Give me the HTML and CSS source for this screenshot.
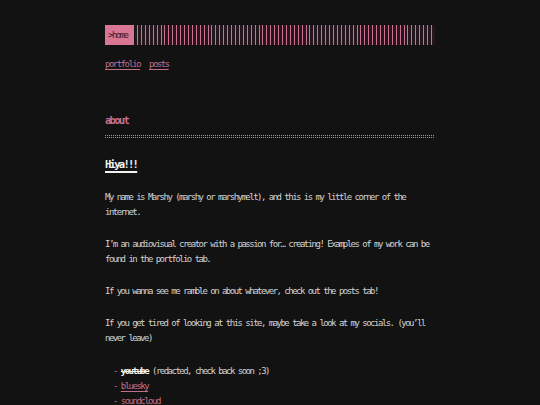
FILE: index.html
```html
<!DOCTYPE html>
<html lang="en">
<head>
<meta charset="utf-8">
<title>home</title>
<link rel="stylesheet" href="styles.css">
</head>
<body>
<div class="page">
  <header class="topbar">
    <div class="home">&gt;home</div>
    <div class="stripes"></div>
  </header>
  <nav class="nav">
    <a href="#">portfolio</a>
    <a href="#">posts</a>
  </nav>
  <section class="about">
    <h2 class="section-title">about</h2>
    <div class="dots"></div>
    <h3 class="hiya">Hiya!!!</h3>
    <p>My name is Marshy (marshy or marshymelt), and this is my little corner of the internet.</p>
    <p>I’m an audiovisual creator with a passion for… creating! Examples of my work can be found in the portfolio tab.</p>
    <p>If you wanna see me ramble on about whatever, check out the posts tab!</p>
    <p>If you get tired of looking at this site, maybe take a look at my socials. (you’ll never leave)</p>
    <ul class="socials">
      <li><s class="strike">youtube</s> (redacted, check back soon ;3)</li>
      <li><a href="#">bluesky</a></li>
      <li><a href="#">soundcloud</a></li>
    </ul>
  </section>
</div>
</body>
</html>
```
FILE: styles.css
```css
html, body {
  margin: 0;
  padding: 0;
  background: #121212;
}
body {
  font-family: "DejaVu Sans Mono", monospace;
  font-size: 9px;
  letter-spacing: -1.52px;
  line-height: 15px;
  color: #d2d2d2;
}
.page {
  width: 330px;
  margin: 0 auto;
  padding-top: 25px;
}
.topbar {
  display: flex;
  height: 20px;
}
.home {
  width: 26px;
  padding-left: 3px;
  background: #d87693;
  color: #3a1624;
  line-height: 20px;
}
.stripes {
  flex: 1;
  margin-left: 1px;
  background: repeating-linear-gradient(90deg, #24161c 0 2px, #c87491 2px 3px, #24161c 3px 3.92px);
}
.nav {
  display: flex;
  gap: 9px;
  margin-top: 12px;
}
.nav a, .socials a {
  color: #c0708c;
  text-decoration: underline;
  text-underline-offset: 2px;
}
.about {
  margin-top: 41px;
}
.section-title {
  margin: 0;
  font-size: 10.5px;
  letter-spacing: -1.72px;
  line-height: 15px;
  color: #c86f8c;
  font-weight: bold;
}
.dots {
  height: 4px;
  margin-top: 7px;
  background-image:
    linear-gradient(to bottom, transparent 1px, #121212 1px),
    linear-gradient(90deg, #dc7c9c 1px, transparent 1px);
  background-size: 2px 2px;
}
.hiya {
  margin: 18px 0 0;
  font-size: 10.5px;
  letter-spacing: -1.72px;
  line-height: 15px;
  color: #f2f2f2;
  font-weight: bold;
  text-decoration: underline;
  text-decoration-thickness: 1.5px;
  text-underline-offset: 3px;
}
p {
  margin: 18px 0 0;
}
p + p {
  margin-top: 17px;
}
.socials {
  list-style: none;
  margin: 18px 0 0;
  padding-left: 8px;
}
.socials li::before {
  content: "- ";
  color: #c0708c;
}
.strike {
  font-weight: bold;
  color: #f0f0f0;
}
```
